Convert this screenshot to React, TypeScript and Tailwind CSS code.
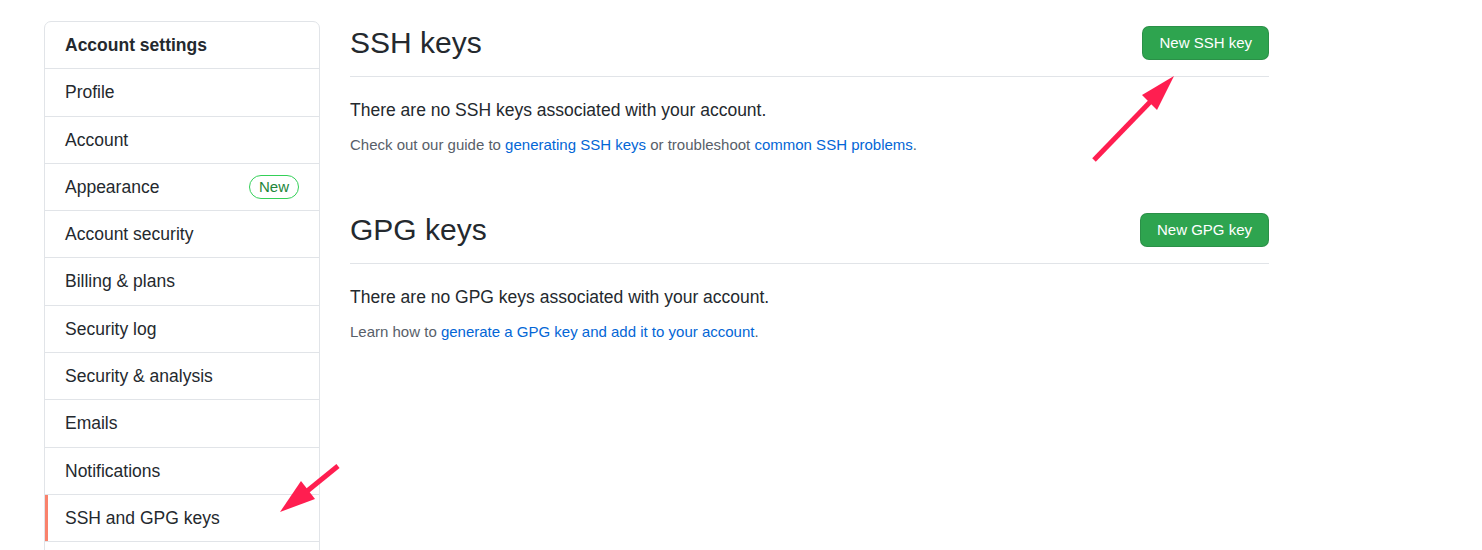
import React from 'react';

const menuItems = [
  'Profile',
  'Account',
  'Appearance',
  'Account security',
  'Billing & plans',
  'Security log',
  'Security & analysis',
  'Emails',
  'Notifications',
  'SSH and GPG keys',
];

const Sidebar: React.FC = () => (
  <nav className="w-[276px] shrink-0 self-start rounded-[7px] border border-[#e1e4e8] bg-white">
    <div className="border-b border-[#e1e4e8] px-[20px] py-[10px] text-[17.5px] leading-[26.3px] font-bold text-[#24292e]">
      Account settings
    </div>
    {menuItems.map((item) => {
      const selected = item === 'SSH and GPG keys';
      return (
        <div
          key={item}
          className="relative flex items-center justify-between border-b border-[#e1e4e8] px-[20px] py-[10px] text-[17.5px] leading-[26.3px] text-[#24292e]"
        >
          {selected && <span className="absolute top-0 bottom-0 left-0 w-[2.5px] bg-[#f9826c]" />}
          <span>{item}</span>
          {item === 'Appearance' && (
            <span className="rounded-full border border-[#34d058] px-[9px] text-[15px] leading-[22px] text-[#22863a]">
              New
            </span>
          )}
        </div>
      );
    })}
    {/* next row, cut off by the bottom of the window */}
    <div className="h-[40px]" />
  </nav>
);

const Subhead: React.FC<{ title: string; button: string; className?: string }> = ({ title, button, className }) => (
  <div className={`flex items-center justify-between border-b border-[#e1e4e8] pb-[11px] ${className ?? ''}`}>
    <h2 className="text-[30px] leading-[45px] font-normal text-[#24292e]">{title}</h2>
    <button className="h-[34px] rounded-[7px] border border-[rgba(27,31,35,0.15)] bg-[#2ea44f] px-[16px] text-[15px] leading-[25px] text-white">
      {button}
    </button>
  </div>
);

export default function App() {
  return (
    <div
      className="relative h-[550px] overflow-hidden bg-white"
      style={{ fontFamily: '"Liberation Sans", Arial, sans-serif' }}
    >
      <div className="ml-[44px] flex w-[1225px] items-start gap-[30px] pt-[20px]">
        <div className="mt-[1px]">
          <Sidebar />
        </div>
        <main className="flex-1">
          <Subhead title="SSH keys" button="New SSH key" />
          <p className="mt-[20px] text-[17.5px] leading-[26.25px] text-[#24292e]">
            There are no SSH keys associated with your account.
          </p>
          <p className="mt-[10.5px] text-[15px] leading-[22.5px] text-[#586069]">
            Check out our guide to <a className="text-[#0366d6]">generating SSH keys</a> or troubleshoot{' '}
            <a className="text-[#0366d6]">common SSH problems</a>.
          </p>

          <Subhead title="GPG keys" button="New GPG key" className="mt-[51px]" />
          <p className="mt-[20px] text-[17.5px] leading-[26.25px] text-[#24292e]">
            There are no GPG keys associated with your account.
          </p>
          <p className="mt-[10.5px] text-[15px] leading-[22.5px] text-[#586069]">
            Learn how to <a className="text-[#0366d6]">generate a GPG key and add it to your account</a>.
          </p>
        </main>
      </div>

      {/* annotation arrows */}
      <svg className="pointer-events-none absolute top-0 left-0" width="1482" height="550">
        <line x1="1094" y1="160" x2="1152" y2="100" stroke="#ff1e50" strokeWidth="5" />
        <polygon points="1174,76 1142,95 1157,110" fill="#ff1e50" />
        <line x1="338" y1="466" x2="306" y2="492" stroke="#ff1e50" strokeWidth="5" />
        <polygon points="280,512 301,481 315,499" fill="#ff1e50" />
      </svg>
    </div>
  );
}
